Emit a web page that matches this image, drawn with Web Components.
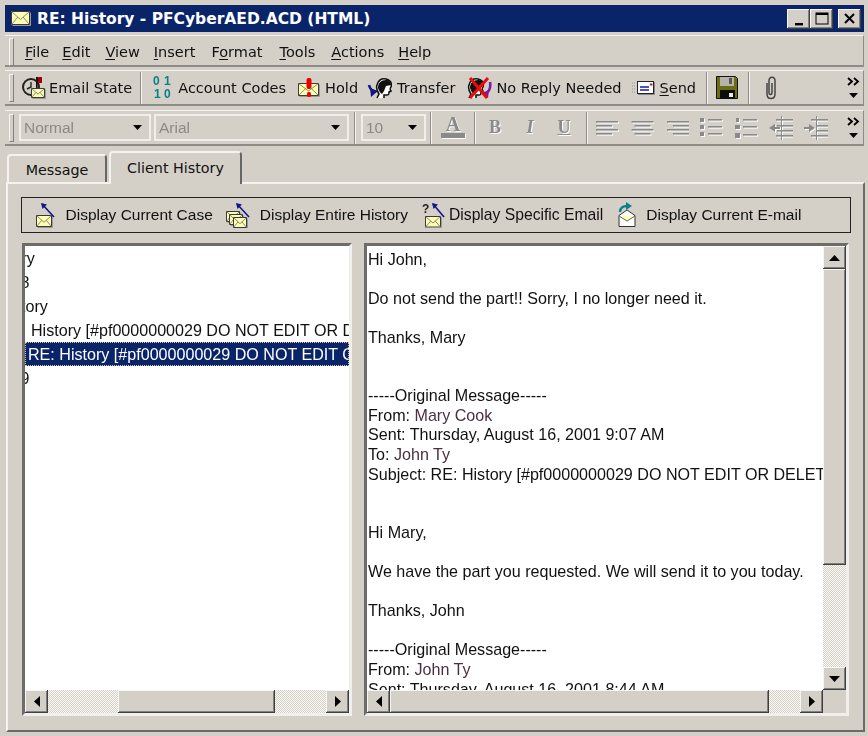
<!DOCTYPE html>
<html>
<head>
<meta charset="utf-8">
<title>RE: History</title>
<style>
    html, body { margin: 0; padding: 0; background: #d4d0c8; overflow: hidden; }
    body { width: 868px; height: 736px; font: 14.5px "DejaVu Sans", sans-serif; color: #111; }
    u { text-decoration-thickness: 1px; text-underline-offset: 2px; }
    .name { color: #4a3040; }
</style>
</head>
<body>

<win-window>
    <win-titlebar>RE: History - PFCyberAED.ACD (HTML)</win-titlebar>

    <tool-band h="32" pad="3">
        <menu-item style="--ml:11px"><u>F</u>ile</menu-item>
        <menu-item style="--ml:13px"><u>E</u>dit</menu-item>
        <menu-item style="--ml:15px"><u>V</u>iew</menu-item>
        <menu-item style="--ml:14px"><u>I</u>nsert</menu-item>
        <menu-item style="--ml:16px">F<u>o</u>rmat</menu-item>
        <menu-item style="--ml:17px"><u>T</u>ools</menu-item>
        <menu-item style="--ml:16px"><u>A</u>ctions</menu-item>
        <menu-item style="--ml:14px"><u>H</u>elp</menu-item>
    </tool-band>

    <tool-band h="36" gap="3">
        <tool-button icon="state" style="--ml:7px;--ig:2px">Email State</tool-button>
        <tool-sep style="--ml:8px"></tool-sep>
        <tool-button icon="codes" style="--ml:11px;--ig:6px">Account Codes</tool-button>
        <tool-button icon="hold" style="--ml:12px;--ig:5px">Hold</tool-button>
        <tool-button icon="transfer" style="--ml:9px;--ig:5px">Transfer</tool-button>
        <tool-button icon="noreply" style="--ml:12px;--ig:4px">No Reply Needed</tool-button>
        <tool-button icon="send" style="--ml:10px;--ig:5px"><u>S</u>end</tool-button>
        <tool-sep style="--ml:10px"></tool-sep>
        <tool-button icon="save" style="--ml:8px"></tool-button>
        <tool-sep style="--ml:10px"></tool-sep>
        <tool-button icon="clip" style="--ml:14px"></tool-button>
        <tool-more></tool-more>
    </tool-band>

    <tool-band h="36" gap="4">
        <combo-box w="132" style="--ml:5px">Normal</combo-box>
        <combo-box w="195" style="--ml:3px">Arial</combo-box>
        <tool-sep style="--ml:5px"></tool-sep>
        <combo-box w="65" style="--ml:5px">10</combo-box>
        <tool-sep style="--ml:4px"></tool-sep>
        <tool-button icon="fontcolor" style="--ml:8px"></tool-button>
        <tool-sep style="--ml:8px"></tool-sep>
        <fmt-letter style="--ml:12px" b>B</fmt-letter>
        <fmt-letter style="--ml:21px" b i>I</fmt-letter>
        <fmt-letter style="--ml:20px" b u>U</fmt-letter>
        <tool-sep style="--ml:15px"></tool-sep>
        <tool-button icon="alignl" style="--ml:8px"></tool-button>
        <tool-button icon="alignc" style="--ml:12px"></tool-button>
        <tool-button icon="alignr" style="--ml:12px"></tool-button>
        <tool-button icon="bullets" style="--ml:10px"></tool-button>
        <tool-button icon="numbers" style="--ml:11px"></tool-button>
        <tool-button icon="outdent" style="--ml:11px"></tool-button>
        <tool-button icon="indent" style="--ml:11px"></tool-button>
        <tool-more></tool-more>
    </tool-band>

    <tab-strip>
        <tab-button w="100">Message</tab-button>
        <tab-button w="133" active>Client History</tab-button>
    </tab-strip>

    <tab-panel>
        <action-bar>
            <action-item icon="dcase" style="--ml:11px;--ig:8.5px">Display Current Case</action-item>
            <action-item icon="dall" style="--ml:12px;--ig:9px">Display Entire History</action-item>
            <action-item icon="dspec" style="--ml:14px;--ig:3px;font-size:15.7px">Display Specific Email</action-item>
            <action-item icon="dmail" style="--ml:13px;--ig:8px">Display Current E-mail</action-item>
        </action-bar>

        <split-view>
            <sunken-pane w="330">
                <list-row style="--ml:-3.5px">ry</list-row>
                <list-row style="--ml:-4.5px">8</list-row>
                <list-row style="--ml:-4px">tory</list-row>
                <list-row style="--ml:6px">History [#pf0000000029 DO NOT EDIT OR D</list-row>
                <list-row style="--ml:3px" selected>RE: History [#pf0000000029 DO NOT EDIT O</list-row>
                <list-row style="--ml:-4.5px">9</list-row>
                <scroll-bar slot="h" dir="h" before="70" size="157"></scroll-bar>
            </sunken-pane>

            <sunken-pane w="485" text>
                <div>Hi John,</div>
                <br>
                <div>Do not send the part!! Sorry, I no longer need it.</div>
                <br>
                <div>Thanks, Mary</div>
                <br><br>
                <div>-----Original Message-----</div>
                <div>From: <span class="name">Mary Cook</span></div>
                <div>Sent: Thursday, August 16, 2001 9:07 AM</div>
                <div>To: <span class="name">John Ty</span></div>
                <div>Subject: RE: History [#pf0000000029 DO NOT EDIT OR DELET</div>
                <br><br>
                <div>Hi Mary,</div>
                <br>
                <div>We have the part you requested. We will send it to you today.</div>
                <br>
                <div>Thanks, John</div>
                <br>
                <div>-----Original Message-----</div>
                <div>From: <span class="name">John Ty</span></div>
                <div>Sent: Thursday, August 16, 2001 8:44 AM</div>
                <scroll-bar slot="v" dir="v" before="0" size="296"></scroll-bar>
                <scroll-bar slot="h" dir="h" before="0" size="379"></scroll-bar>
                <div slot="corner"></div>
            </sunken-pane>
        </split-view>
    </tab-panel>
</win-window>

<script>
// small helper, every element below is the same shape
function define(tag, css, html) {
    customElements.define(tag, class extends HTMLElement {
        constructor() {
            super();
            const shadow = this.attachShadow({ mode: 'open' });
            const template = document.createElement('template');
            template.innerHTML = `<style>${css}</style>${typeof html === 'function' ? html(this) : html}`;
            shadow.appendChild(template.content.cloneNode(true));
        }
    });
}

const RAISED = 'box-shadow: inset -1px -1px #404040, inset 1px 1px #f6f5f2, inset -2px -2px #808080;';
const UI_FONT = 'font: 14.5px "DejaVu Sans", sans-serif;';

// --- icons ---------------------------------------------------------------
function env(x, y, w, h) {
    return `<rect x="${x}" y="${y}" width="${w}" height="${h}" fill="#ffffb4" stroke="#3a3a3a"/>
        <path d="M${x} ${y}L${x + w / 2} ${y + h * .62}L${x + w} ${y}M${x} ${y + h}L${x + w * .36} ${y + h * .42}M${x + w} ${y + h}L${x + w * .64} ${y + h * .42}" fill="none" stroke="#8a8a70"/>
        <path d="M${x + 1} ${y + h + 1}H${x + w + 1}V${y + 1}" fill="none" stroke="#9a9a9a"/>`;
}
function head(x) {
    return `<path d="M${x + 2} 22l2-4c-2-3-3-6-2-9 1-5 5-7 9-6 4 1 6 4 5 8-1 1-1 3 0 4l-2 1c0 2 0 3-2 3l-3 0 0 3" fill="#fff" stroke="#111" stroke-width="1.6"/>
        <path d="M${x + 3} 12c0-5 3-8 8-8 3 0 5 2 5 5l-5 1-2 5-2 3c-2-1-3-3-4-6z" fill="#111"/>`;
}
function pole(dir) {
    const bars = [1, 5, 9, 13].map(y => {
        const w = y % 8 === 1 ? 22 : 16;
        const x = dir === 'l' ? 0 : dir === 'r' ? 23 - w : 11.5 - w / 2;
        return `<rect x="${x}" y="${y + 2}" width="${w}" height="1.6" />`;
    });
    return bars.join('');
}
function arrowUp(x1, y1, x2, y2) {
    return `<path d="M${x1} ${y1}L${x2 + 1} ${y2 + 1}" stroke="#14148c" stroke-width="1.6" fill="none"/>
        <path d="M${x2} ${y2}l6 1.5-4.5 4.5z" fill="#14148c"/>`;
}
const GREY = 'fill="#8a8a8a" style="filter:drop-shadow(1px 1px 0 #fff)"';
const ICONS = {
    mail: [22, 17, env(1.5, 1.5, 18, 13)],
    state: [26, 24, `<circle cx="10" cy="11" r="8" fill="none" stroke="#222" stroke-width="2"/>
        <path d="M10 6v5l-4 2" fill="none" stroke="#222" stroke-width="1.4"/>
        <rect x="16" y="1" width="5" height="6" fill="#a00010"/><rect x="15" y="1" width="1.6" height="12" fill="#111"/>
        ${env(10.5, 12.5, 13, 9)}`],
    codes: [19, 25, `<g font-family="Liberation Sans" font-weight="700" font-size="12" fill="#0a8088">
        <text x="0" y="10">0</text><text x="11" y="10">1</text><text x="1" y="23">1</text><text x="11" y="23">0</text></g>`],
    hold: [22, 22, `${env(.5, 6.5, 20, 12)}<rect x="8.5" y="1" width="5" height="11" rx="2" fill="#ee0000"/><rect x="9" y="15" width="4" height="5" rx="1.5" fill="#ee0000"/>`],
    transfer: [25, 24, `<path d="M2 9c1 4 3 6 6 7" fill="none" stroke="#14148c" stroke-width="2.6"/><path d="M3 12l8 3-7 6z" fill="#14148c"/>${head(8)}`],
    noreply: [25, 24, `<path d="M23 6c1 6-1 10-5 12" fill="none" stroke="#7a18a8" stroke-width="2.6"/><path d="M22 14l-7 3 6 5z" fill="#7a18a8"/>${head(0)}
        <path d="M3 2L20 22M21 2L3 22" stroke="#ee0a0a" stroke-width="3"/>`],
    send: [23, 18, `<path d="M0 4h4M0 7h4M0 10h4M0 13h4" stroke="#999" stroke-dasharray="1 1"/>
        <rect x="5.5" y="2.5" width="16" height="12" fill="#fff" stroke="#222"/><path d="M6 15.5h16.5V3" fill="none" stroke="#888"/>
        <path d="M8 8h9M8 11h9" stroke="#1818a8" stroke-width="1.4"/><rect x="18" y="4.5" width="2.4" height="2" fill="#d01020"/>`],
    save: [22, 23, `<path d="M.5 .5h19l2 2v20H.5z" fill="#6c6c10" stroke="#111"/><rect x="4" y="1" width="14" height="9" fill="#b4b4ac"/><rect x="13" y="2" width="3" height="6" fill="#5a5a50"/>
        <rect x="4" y="14" width="15" height="8.5" fill="#0c0c0c"/><rect x="13" y="17" width="4" height="4" fill="#e8e8e8"/>`],
    clip: [13, 24, `<path d="M3 7v11c0 6 8 6 8 0V5c0-5-6-5-6 0v12c0 2 3 2 3 0V7" fill="none" stroke="#444" stroke-width="1.5"/>`],
    fontcolor: [26, 26, `<text x="13" y="16" text-anchor="middle" font-family="Liberation Serif" font-weight="700" font-size="20" ${GREY}>A</text><rect x="1" y="18" width="24" height="5" ${GREY}/>`],
    alignl: [23, 19, `<g ${GREY}>${pole('l')}</g>`],
    alignc: [23, 19, `<g ${GREY}>${pole('c')}</g>`],
    alignr: [23, 19, `<g ${GREY}>${pole('r')}</g>`],
    bullets: [24, 21, `<g ${GREY}><rect x="1" y="1" width="4" height="4"/><rect x="1" y="8" width="4" height="4"/><rect x="1" y="15" width="4" height="4"/>
        <rect x="9" y="2" width="14" height="1.6"/><rect x="9" y="9" width="14" height="1.6"/><rect x="9" y="16" width="14" height="1.6"/></g>`],
    numbers: [24, 22, `<g ${GREY}><rect x="2" y="1" width="3" height="4"/><rect x="1" y="8" width="5" height="4"/><rect x="1" y="16" width="5" height="5"/>
        <rect x="9" y="2" width="14" height="1.6"/><rect x="9" y="9" width="14" height="1.6"/><rect x="9" y="17" width="14" height="1.6"/></g>`],
    outdent: [24, 24, `<g ${GREY}><rect x="7" y="3" width="17" height="1.6"/><rect x="8" y="9" width="16" height="1.6"/><rect x="8" y="14" width="16" height="1.6"/><rect x="7" y="19" width="17" height="1.6"/>
        <rect x="12" y="0" width="1" height="24"/><path d="M0 12l6-4v3h5v2H6v3z"/></g>`],
    indent: [24, 24, `<g ${GREY}><rect x="7" y="3" width="17" height="1.6"/><rect x="13" y="9" width="11" height="1.6"/><rect x="13" y="14" width="11" height="1.6"/><rect x="7" y="19" width="17" height="1.6"/>
        <rect x="12" y="0" width="1" height="24"/><path d="M11 12L5 8v3H0v2h5v3z"/></g>`],
    dcase: [24, 26, `${env(3.5, 13.5, 15, 11)}${arrowUp(21, 15, 8, 1)}`],
    dall: [26, 26, `${env(1.5, 9.5, 13, 10)}${env(4.5, 12.5, 13, 10)}${env(8.5, 15.5, 13, 10)}${arrowUp(24, 15, 11, 1)}`],
    dspec: [24, 26, `<text x="0" y="11" font-family="Liberation Sans" font-weight="700" font-size="12" fill="#222">?</text>${env(3.5, 14.5, 15, 10.5)}${arrowUp(22, 15, 10, 1)}`],
    dmail: [22, 26, `<path d="M3 13.5L11 8l8 5.5v11H3z" fill="#fff" stroke="#333"/><path d="M3 14l8 5 8-5" fill="#ffffb4" stroke="#666"/>
        <path d="M4 10c0-4 3-6 7-6" fill="none" stroke="#0a8088" stroke-width="2.4"/><path d="M10 0l6 4-6 4z" fill="#0a8088"/>`]
};
function icon(name) {
    const [w, h, body] = ICONS[name] || [0, 0, ''];
    return `<svg width="${w}" height="${h}" viewBox="0 0 ${w} ${h}" aria-hidden="true">${body}</svg>`;
}

// --- window frame --------------------------------------------------------
define('win-window', `
    :host { display: flex; flex-direction: column; width: 868px; height: 736px; box-sizing: border-box; padding: 5px 3px 0 5px; filter: blur(.4px); }
`, `<slot></slot>`);

define('win-titlebar', `
    :host { display: flex; align-items: center; height: 27px; flex: none; background: #0a246a; color: #fff; margin-right: 1px; }
    .ico { margin-left: 5px; display: flex; }
    .txt { margin-left: 5px; font: 700 15.5px "DejaVu Sans", sans-serif; white-space: nowrap; flex: 1; }
    .btns { display: flex; margin-right: 3px; }
`, () => `<span class="ico">${icon('mail')}</span><span class="txt"><slot></slot></span>
    <span class="btns">
        <win-capbutton kind="min"></win-capbutton><win-capbutton kind="max"></win-capbutton><win-capbutton kind="close" style="margin-left:5px"></win-capbutton>
    </span>`);

define('win-capbutton', `
    :host { display: flex; align-items: center; justify-content: center; width: 23px; height: 20px; background: #d4d0c8; ${RAISED} }
`, el => {
    const g = {
        min: '<rect x="3" y="11" width="8" height="2.4" fill="#000"/>',
        max: '<rect x="1" y="1" width="12" height="11" fill="none" stroke="#000"/><rect x="1" y="1" width="12" height="2" fill="#000"/>',
        close: '<path d="M2 2l9 9M11 2l-9 9" stroke="#000" stroke-width="2"/>'
    }[el.getAttribute('kind')];
    return `<svg width="14" height="14">${g}</svg>`;
});

// --- toolbars ------------------------------------------------------------
define('tool-band', `
    :host { display: flex; align-items: center; flex: none; box-sizing: border-box; margin-top: 3px; margin-right: 1px; border-top: 1px solid #f4f3f0; border-bottom: 2px solid #8e8c86; border-right: 1px solid #8e8c86; position: relative; }
    .grip { flex: none; width: 3px; height: 26px; margin-left: 4px; border: 1px solid; border-color: #f6f5f2 #808080 #808080 #f6f5f2; }
`, el => `<style>:host { height: ${el.getAttribute('h')}px; margin-top: ${el.getAttribute('gap') || 3}px; padding-top: ${el.getAttribute('pad') || 0}px; }</style><span class="grip"></span><slot></slot>`);

define('menu-item', `
    :host { display: block; flex: none; margin-left: var(--ml, 0); ${UI_FONT} white-space: nowrap; }
`, `<slot></slot>`);

define('tool-button', `
    :host { display: inline-flex; align-items: center; flex: none; margin-left: var(--ml, 0); gap: var(--ig, 3px); ${UI_FONT} white-space: nowrap; }
    svg { display: block; }
`, el => `${icon(el.getAttribute('icon'))}${el.childNodes.length ? '<span><slot></slot></span>' : ''}`);

define('tool-sep', `
    :host { display: block; flex: none; width: 1px; height: 32px; margin-left: var(--ml, 0); background: #8e8c86; border-right: 1px solid #f6f5f2; }
`, ``);

define('tool-more', `
    :host { display: flex; flex-direction: column; align-items: center; gap: 7px; margin-left: auto; margin-right: 3px; width: 14px; }
`, `<svg width="13" height="9"><path d="M1 1l4 3.5-4 3.5M7 1l4 3.5-4 3.5" fill="none" stroke="#000" stroke-width="1.8"/></svg>
    <svg width="9" height="5"><path d="M0 0h9L4.5 5z"/></svg>`);

define('combo-box', `
    :host { display: flex; align-items: center; justify-content: space-between; flex: none; box-sizing: border-box; height: 27px; margin-left: var(--ml, 0); padding: 0 7px 0 3px; border: 2px solid #f0efec; font: 15.5px "Liberation Sans", sans-serif; color: #8c8a84; }
    svg { display: block; }
`, el => `<style>:host { width: ${el.getAttribute('w')}px; }</style><span><slot></slot></span><svg width="9" height="5"><path d="M0 0h9L4.5 5z"/></svg>`);

define('fmt-letter', `
    :host { display: inline-flex; justify-content: center; flex: none; width: 14px; margin-left: var(--ml, 0); font: 700 18px "Liberation Serif", serif; color: #8a8a8a; text-shadow: 1px 1px 0 #fff; }
    :host([i]) { font-style: italic; }
    :host([u]) { text-decoration: underline; }
`, `<slot></slot>`);

// --- tabs ----------------------------------------------------------------
define('tab-strip', `
    :host { display: flex; align-items: flex-end; flex: none; height: 32px; margin-top: 4px; padding-left: 2px; gap: 2px; position: relative; z-index: 1; }
`, `<slot></slot>`);

define('tab-button', `
    :host { display: flex; align-items: center; justify-content: center; box-sizing: border-box; height: 28px; padding-top: 1px; ${UI_FONT} font-size: 14.3px; border-top: 2px solid #f4f3f0; border-left: 2px solid #f4f3f0; border-right: 2px solid #666; border-radius: 4px 4px 0 0; background: #d4d0c8; }
    :host([active]) { height: 33px; margin-bottom: -2px; padding-top: 0; padding-bottom: 2px; }
`, el => `<style>:host { width: ${el.getAttribute('w')}px; }</style><slot></slot>`);

define('tab-panel', `
    :host { display: flex; flex-direction: column; flex: none; box-sizing: border-box; height: 550px; margin-left: 1px; padding: 13px 12px 0 13px; border-top: 2px solid #f4f3f0; border-left: 2px solid #f4f3f0; border-right: 2px solid #6a6a6a; border-bottom: 2px solid #6a6a6a; }
`, `<slot></slot>`);

define('action-bar', `
    :host { display: flex; align-items: center; flex: none; box-sizing: border-box; height: 36px; padding-bottom: 1px; border: 1.5px solid #222; }
`, `<slot></slot>`);

define('action-item', `
    :host { display: inline-flex; align-items: center; flex: none; margin-left: var(--ml, 0); gap: var(--ig, 6px); font: 15.5px "Liberation Sans", sans-serif; white-space: nowrap; }
    svg { display: block; }
`, el => `${icon(el.getAttribute('icon'))}<span><slot></slot></span>`);

// --- panes ---------------------------------------------------------------
define('split-view', `
    :host { display: flex; gap: 12px; flex: none; margin: 10px 0 0 1px; }
`, `<slot></slot>`);

define('sunken-pane', `
    :host { display: grid; flex: none; box-sizing: border-box; height: 473px; background: #d4d0c8; border: 3px solid; border-color: #6e6c68 #f0efec #f0efec #6e6c68; grid-template-rows: 1fr 23px; min-height: 0; }
    .body { background: #fff; overflow: hidden; min-width: 0; min-height: 0; white-space: nowrap; font: 16.1px/19.55px "Liberation Sans", sans-serif; }
    :host([text]) .body { padding: 3.5px 0 0 1px; box-sizing: border-box; }
`, el => {
    const text = el.hasAttribute('text');
    return `<style>:host { width: ${el.getAttribute('w')}px; grid-template-columns: ${text ? '1fr 23px' : '1fr'}; }</style>
    <div class="body"><slot></slot></div>
    ${text ? '<slot name="v"></slot>' : ''}
    <slot name="h"></slot>
    ${text ? '<slot name="corner"></slot>' : ''}`;
});

define('list-row', `
    :host { display: block; height: 24px; overflow: hidden; box-sizing: border-box; font: 16.1px/24px "Liberation Sans", sans-serif; white-space: nowrap; }
    span { margin-left: var(--ml, 0); }
    :host([selected]) { background: #0a246a; color: #fff; outline: 1px dotted #d8c890; outline-offset: -1px; }
`, `<span><slot></slot></span>`);

define('scroll-bar', `
    :host { display: flex; background: #d4d0c8; min-width: 0; min-height: 0; }
    :host([dir="v"]) { flex-direction: column; grid-row: 1; grid-column: 2; }
    :host([dir="h"]) { flex-direction: row; }
    .arrow { flex: none; width: 23px; height: 23px; display: flex; align-items: center; justify-content: center; background: #d4d0c8; ${RAISED} }
    .thumb { flex: none; box-sizing: border-box; background: #d4d0c8; ${RAISED} }
    .track { background: repeating-conic-gradient(#d4d0c8 0 25%, #fbfaf7 0 50%) 0 0 / 2px 2px; }
    .rest { flex: 1; }
    svg { display: block; }
`, el => {
    const vertical = el.getAttribute('dir') === 'v';
    const before = el.getAttribute('before');
    const size = el.getAttribute('size');
    const a = vertical ? ['M0 6h11L5.5 0z', 'M0 0h11L5.5 6z'] : ['M6 0v11L0 5.5z', 'M0 0v11L6 5.5z'];
    const box = vertical ? 'width="11" height="6"' : 'width="6" height="11"';
    const dim = vertical ? 'height' : 'width';
    return `<span class="arrow"><svg ${box}><path d="${a[0]}"/></svg></span>
        <span class="track" style="flex:none;${dim}:${before}px"></span>
        <span class="thumb" style="${dim}:${size}px"></span>
        <span class="track rest"></span>
        <span class="arrow"><svg ${box}><path d="${a[1]}"/></svg></span>`;
});
</script>
</body>
</html>
